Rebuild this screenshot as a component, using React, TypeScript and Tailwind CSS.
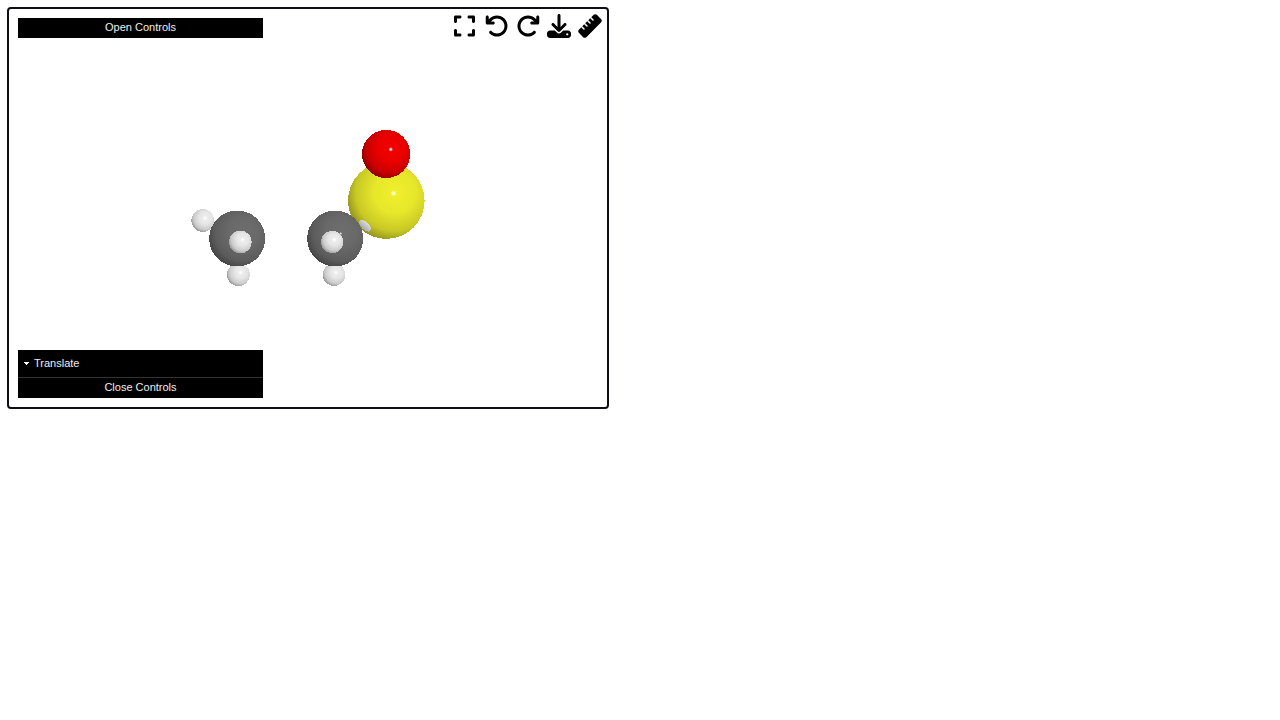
import { FaArrowRotateLeft, FaArrowRotateRight, FaDownload, FaExpand, FaRuler } from "react-icons/fa6";

type Atom = { element: "H" | "C" | "O" | "S"; x: number; y: number; r: number };

const shades: Record<Atom["element"], [string, string, string, string]> = {
  H: ["#f0f0f0", "#e6e6e6", "#cacaca", "#8c8c8c"],
  C: ["#6e6e6e", "#696969", "#5c5c5c", "#414141"],
  O: ["#f40000", "#ea0000", "#c80000", "#800000"],
  S: ["#f0f02d", "#e7e72b", "#c8c826", "#86861a"],
};

const atoms: Atom[] = [
  { element: "S", x: 386.3, y: 200.6, r: 38.3 },
  { element: "O", x: 386.1, y: 154, r: 24.1 },
  { element: "H", x: 202.8, y: 220.5, r: 11.4 },
  { element: "H", x: 238.4, y: 274.7, r: 11.4 },
  { element: "H", x: 334, y: 274.7, r: 11.2 },
  { element: "C", x: 237.2, y: 238.5, r: 28 },
  { element: "C", x: 335.2, y: 238.5, r: 28 },
  { element: "H", x: 240.3, y: 242, r: 11.3 },
  { element: "H", x: 332.1, y: 242, r: 11.1 },
];

function Molecule() {
  return (
    <svg className="col-start-1 row-start-1 h-[398px] w-[598px]" viewBox="9 9 598 398">
      <defs>
        {Object.entries(shades).map(([name, stops]) => (
          <radialGradient key={name} id={name} cx="0.61" cy="0.39" r="0.68">
            <stop offset="0" stopColor={stops[0]} />
            <stop offset="0.4" stopColor={stops[1]} />
            <stop offset="0.75" stopColor={stops[2]} />
            <stop offset="1" stopColor={stops[3]} />
          </radialGradient>
        ))}
        <radialGradient id="shine">
          <stop offset="0" stopColor="#fff" />
          <stop offset="0.4" stopColor="#fff" stopOpacity="0.7" />
          <stop offset="1" stopColor="#fff" stopOpacity="0" />
        </radialGradient>
        <linearGradient id="tip" x1="0" y1="0" x2="0" y2="1">
          <stop offset="0" stopColor="#dadada" />
          <stop offset="1" stopColor="#a8a8a8" />
        </linearGradient>
      </defs>
      {atoms.map((a, i) => (
        <g key={i}>
          <circle cx={a.x} cy={a.y} r={a.r} fill={`url(#${a.element})`} shapeRendering="crispEdges" />
          {a.element !== "C" && (
            <circle cx={a.x + a.r * 0.19} cy={a.y - a.r * 0.19} r={a.element === "S" ? 3 : 2.4} fill="url(#shine)" />
          )}
        </g>
      ))}
      <circle cx="340.7" cy="233.5" r="1.5" fill="url(#shine)" />
      <ellipse cx="365" cy="225.8" rx="7.4" ry="3.7" transform="rotate(44 365 225.8)" fill="url(#tip)" shapeRendering="crispEdges" />
    </svg>
  );
}

export default function App() {
  return (
    <main className="min-h-screen bg-white pl-[7px] pt-[7px] font-['Liberation_Sans',Arial,sans-serif] text-[11px] text-[#eee]">
      <section className="grid h-[402px] w-[602px] rounded-[4px] border-2 border-[#101014]">
        <Molecule />
        <div className="z-10 col-start-1 row-start-1 flex flex-col justify-between p-[9px]">
          <header className="flex h-5 items-start justify-between">
            <button className="h-5 w-[245px] bg-black pb-px text-center leading-[19px]">Open Controls</button>
            <nav className="-mr-1 -mt-1 flex items-center text-2xl text-black">
              <button aria-label="Fullscreen" className="mr-[10px]"><FaExpand className="h-6 w-[21px]" /></button>
              <button aria-label="Undo" className="mr-[7px]"><FaArrowRotateLeft /></button>
              <button aria-label="Redo" className="mr-[7px]"><FaArrowRotateRight /></button>
              <button aria-label="Download" className="mr-[7px]"><FaDownload /></button>
              <button aria-label="Measure"><FaRuler /></button>
            </nav>
          </header>
          <div className="flex w-[245px] flex-col bg-black">
            <button className="flex h-7 items-center gap-[5px] border-b border-[#333] pl-1.5 text-left">
              <svg className="h-[3px] w-[5px]" viewBox="0 0 5 3" fill="#fff" shapeRendering="crispEdges">
                <path d="M0 0h5v1H4v1H3v1H2V2H1V1H0Z" />
              </svg>
              Translate
            </button>
            <button className="h-5 pb-px text-center leading-[19px]">Close Controls</button>
          </div>
        </div>
      </section>
    </main>
  );
}
